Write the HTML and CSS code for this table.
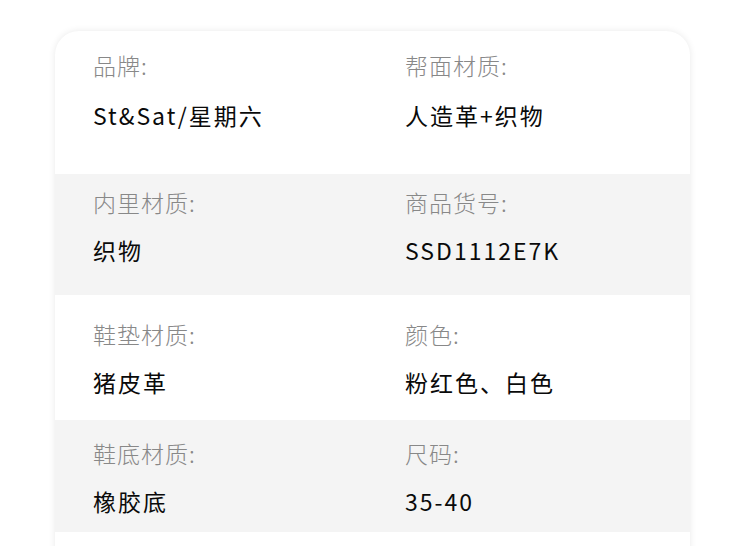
FILE: index.html
```html
<!DOCTYPE html>
<html lang="zh-CN">
<head>
<meta charset="utf-8">
<title>商品参数</title>
<link rel="stylesheet" href="styles.css">
</head>
<body>
<div class="page">
  <div class="card">
    <div class="row row-1">
      <div class="cell"><div class="label">品牌:</div><div class="value">St&amp;Sat/星期六</div></div>
      <div class="cell"><div class="label">帮面材质:</div><div class="value">人造革+织物</div></div>
    </div>
    <div class="row row-2 alt">
      <div class="cell"><div class="label">内里材质:</div><div class="value">织物</div></div>
      <div class="cell"><div class="label">商品货号:</div><div class="value">SSD1112E7K</div></div>
    </div>
    <div class="row row-3">
      <div class="cell"><div class="label">鞋垫材质:</div><div class="value">猪皮革</div></div>
      <div class="cell"><div class="label">颜色:</div><div class="value">粉红色、白色</div></div>
    </div>
    <div class="row row-4 alt">
      <div class="cell"><div class="label">鞋底材质:</div><div class="value">橡胶底</div></div>
      <div class="cell"><div class="label">尺码:</div><div class="value">35-40</div></div>
    </div>
    <div class="row row-5"></div>
  </div>
</div>
</body>
</html>
```

FILE: styles.css
```css
html, body {
  margin: 0;
  padding: 0;
  background: #ffffff;
}
body {
  width: 750px;
  height: 546px;
  overflow: hidden;
  font-family: "Noto Sans CJK SC", "Noto Sans", sans-serif;
}
.page {
  padding: 31px 60px 0 55px;
}
.card {
  width: 635px;
  background: #ffffff;
  border-radius: 24px 24px 0 0;
  box-shadow: 0 0 7px rgba(0, 0, 0, 0.09);
  overflow: hidden;
}
.row {
  display: grid;
  grid-template-columns: 312px 1fr;
  padding-left: 38px;
  box-sizing: border-box;
}
.alt {
  background: #f4f4f4;
}
.row-1 { height: 143px; padding-top: 19px; }
.row-2 { height: 121px; padding-top: 13px; }
.row-3 { height: 125px; padding-top: 24px; }
.row-4 { height: 112px; padding-top: 18px; }
.row-5 { height: 30px; }
.label {
  font-size: 23px;
  line-height: 30px;
  color: #888888;
  font-weight: 300;
  letter-spacing: 1px;
}
.value {
  margin-top: 18px;
  font-size: 23px;
  line-height: 30px;
  color: #0a0a0a;
  letter-spacing: 2px;
}
.row-1 .value {
  margin-top: 20px;
}
```
